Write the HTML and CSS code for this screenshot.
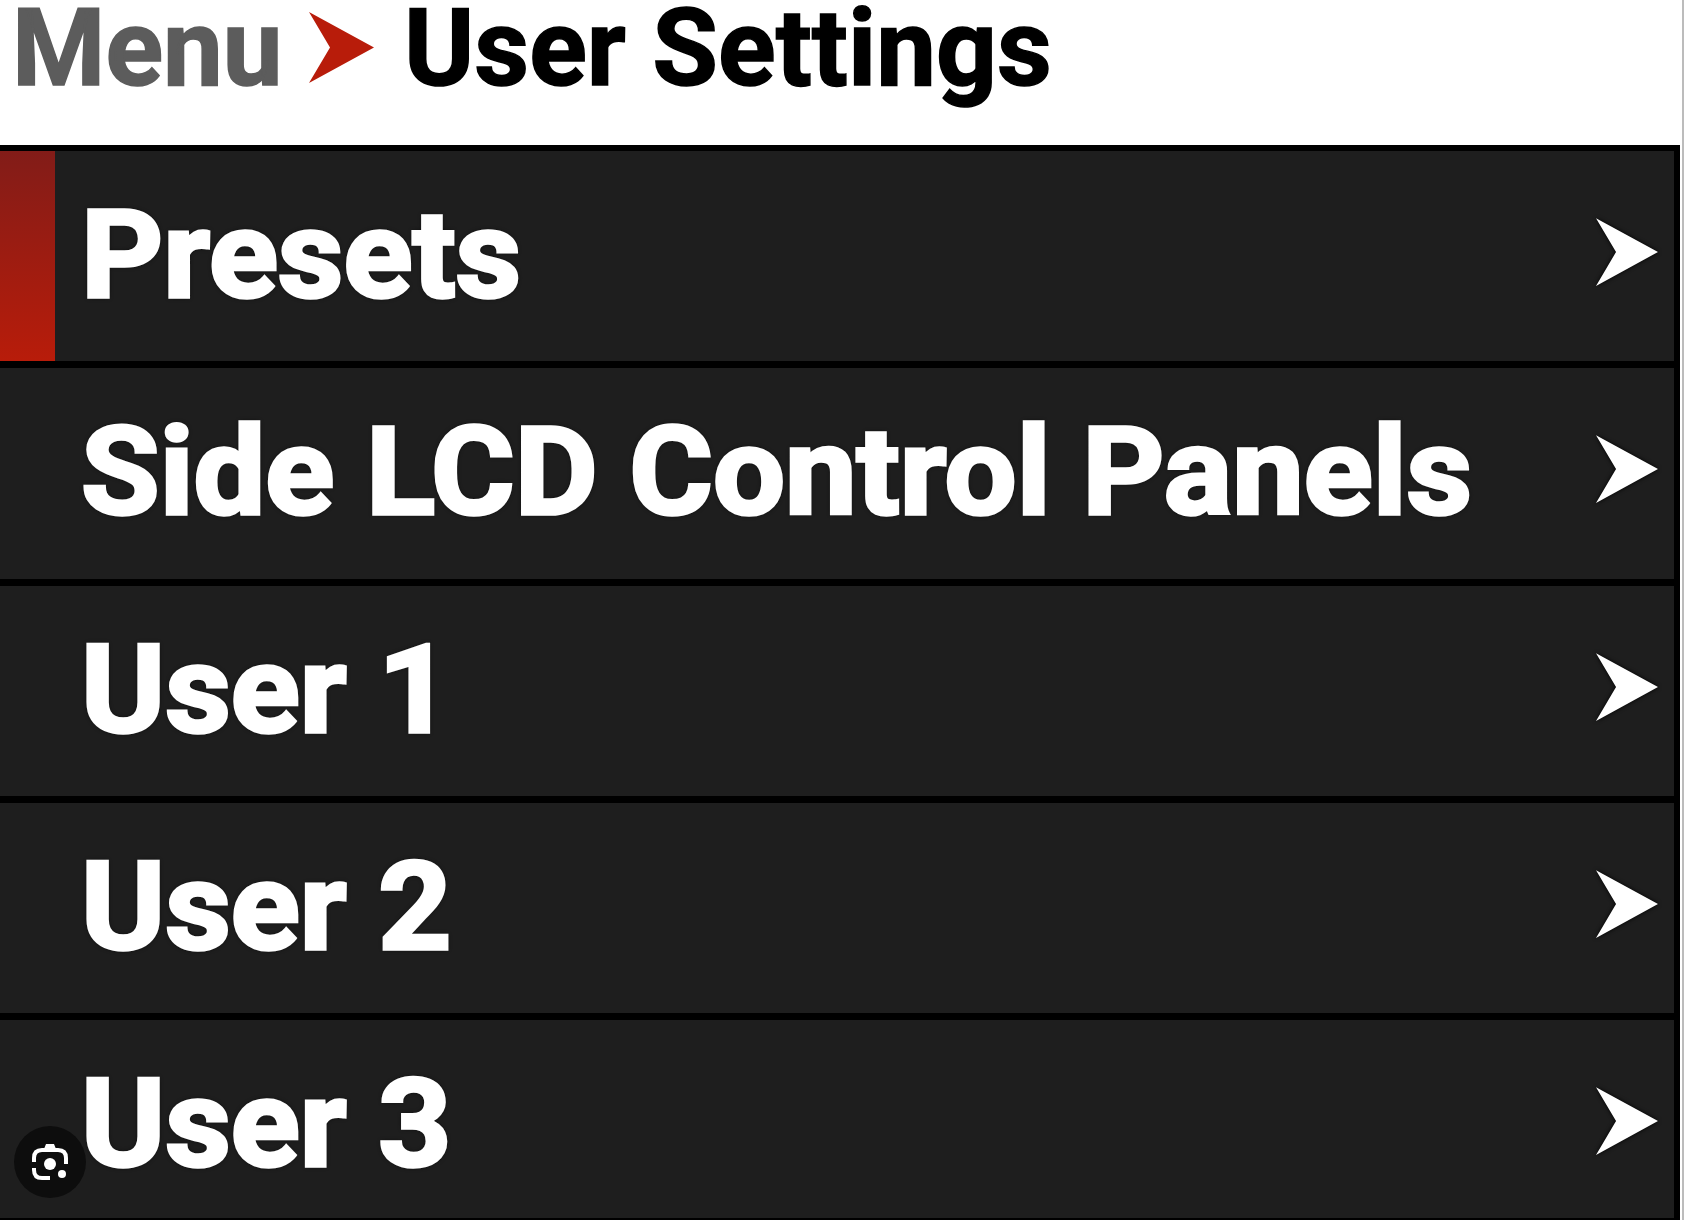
FILE: index.html
```html
<!DOCTYPE html>
<html lang="en">
  <head>
    <meta charset="UTF-8" />
    <meta name="viewport" content="width=device-width, initial-scale=1.0" />
    <title>User Settings</title>
    <link rel="stylesheet" href="styles.css">
  </head>
  <body>
    <div class="screen">
      <header class="breadcrumb">
        <a class="crumb crumb-parent">Menu</a>
        <svg class="arrow-red" viewBox="0 0 65 72"><path d="M0 0 L65 35.5 L0 71 L21 35.5 Z" /></svg>
        <h1 class="crumb crumb-current">User Settings</h1>
      </header>

      <ul class="menu">
        <li class="menu-item selected">
          <span class="label">Presets</span>
          <svg class="arrow" viewBox="0 0 65 72"><path d="M0 0 L65 35.5 L0 71 L21 35.5 Z" /></svg>
        </li>
        <li class="menu-item">
          <span class="label">Side LCD Control Panels</span>
          <svg class="arrow" viewBox="0 0 65 72"><path d="M0 0 L65 35.5 L0 71 L21 35.5 Z" /></svg>
        </li>
        <li class="menu-item">
          <span class="label">User 1</span>
          <svg class="arrow" viewBox="0 0 65 72"><path d="M0 0 L65 35.5 L0 71 L21 35.5 Z" /></svg>
        </li>
        <li class="menu-item">
          <span class="label">User 2</span>
          <svg class="arrow" viewBox="0 0 65 72"><path d="M0 0 L65 35.5 L0 71 L21 35.5 Z" /></svg>
        </li>
        <li class="menu-item">
          <span class="label">User 3</span>
          <svg class="arrow" viewBox="0 0 65 72"><path d="M0 0 L65 35.5 L0 71 L21 35.5 Z" /></svg>
        </li>
      </ul>
    </div>

    <button class="lens-button" aria-label="Search image">
      <svg viewBox="0 0 36 36">
        <path class="lens-frame" d="M2 18 V14 Q2 6 10 6 H26 Q34 6 34 14 V20 M2 24 V26 Q2 34 10 34 H18" />
        <path d="M12 5 L14 0 H22 L24 5 Z" />
        <circle cx="18" cy="20" r="6" />
        <circle cx="30" cy="30" r="4" />
      </svg>
    </button>
  </body>
</html>
```
FILE: styles.css
```css
* {
  margin: 0;
  padding: 0;
  box-sizing: border-box;
}

body {
  height: 100vh;
  overflow: hidden;
  background: #fff;
  font-family: Roboto, sans-serif;
}

.screen {
  height: 100vh;
  border-right: 2px solid #bcbcbc;
}

/* Breadcrumb */
.breadcrumb {
  display: flex;
  height: 145px;
  padding-left: 12px;
}

.crumb {
  font-size: 108px;
  font-weight: 700;
  line-height: 96px;
  white-space: nowrap;
  transform: scaleX(0.988);
  transform-origin: 0 0;
  -webkit-text-stroke: 1.5px currentColor;
}

.crumb-parent {
  width: 297px;
  color: #5c5c5c;
}

.crumb-current {
  margin-left: 30px;
  color: #000;
}

.arrow-red {
  flex: none;
  width: 65px;
  height: 72px;
  margin-top: 12px;
  fill: #b81c0a;
}

/* Menu list */
.menu {
  margin-right: 2px;
  border-top: 6px solid #000;
  border-right: 6px solid #000;
  list-style: none;
}

.menu-item {
  display: flex;
  align-items: flex-start;
  justify-content: space-between;
  height: 217.3px;
  padding: 0 16px 0 81px;
  border-bottom: 7px solid #000;
  background: #1e1e1e;
}

.menu-item:last-child {
  height: 200px;
  border-bottom-width: 2px;
}

.menu-item.selected {
  background: linear-gradient(#821c18, #b81c0a) 0 0 / 55px 100% no-repeat #1e1e1e;
}

.label {
  color: #fff;
  font-size: 121.5px;
  font-weight: 700;
  line-height: 210px;
  white-space: nowrap;
  transform: scaleX(1.051);
  transform-origin: 0 0;
  -webkit-text-stroke: 3.5px #fff;
  text-shadow: 0 0 5px #000;
}

.arrow {
  flex: none;
  width: 62px;
  height: 69px;
  margin-top: 67px;
  overflow: visible;
  fill: #fff;
  filter: drop-shadow(0 0 2px #000);
}

/* Floating search button */
.lens-button {
  position: absolute;
  left: 14px;
  bottom: 22px;
  width: 72px;
  height: 72px;
  padding: 18px;
  border: none;
  border-radius: 50%;
  background: #0d0d0d;
}

.lens-button svg {
  display: block;
  width: 36px;
  height: 36px;
  fill: #fff;
}

.lens-button .lens-frame {
  fill: none;
  stroke: #fff;
  stroke-width: 4;
}
```
